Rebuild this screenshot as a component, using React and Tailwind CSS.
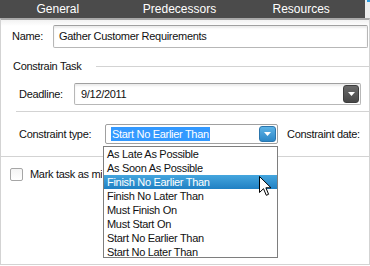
import React from "react";

const tabs = ["General", "Predecessors", "Resources"];

const options = [
  "As Late As Possible",
  "As Soon As Possible",
  "Finish No Earlier Than",
  "Finish No Later Than",
  "Must Finish On",
  "Must Start On",
  "Start No Earlier Than",
  "Start No Later Than",
];

const DownTriangle = () => (
  <svg width="7" height="4" viewBox="0 0 7 4">
    <path d="M0 0 H7 L3.5 4 Z" fill="#ffffff" />
  </svg>
);

const App = () => {
  return (
    <div
      className="relative w-[370px] h-[266px] overflow-hidden bg-white text-[11px] tracking-[-0.3px] text-[#111]"
      style={{ fontFamily: '"Liberation Sans", Arial, sans-serif' }}
    >
      {/* Tab header */}
      <div className="flex h-[18px]">
        <div className="flex flex-1 bg-[#4b4b4b] text-white text-[12px] tracking-normal">
          {tabs.map((t) => (
            <div key={t} className="flex-1 flex items-center justify-center pr-[6px]">
              {t}
            </div>
          ))}
        </div>
        <div className="w-[5px] bg-[#ececec]">
          <div className="ml-auto w-[3px] h-[2px] bg-[#2b9be0]" />
        </div>
      </div>

      {/* Body */}
      <div className="h-[247px] border-t-[2px] border-t-[#a9a9a9] border-l border-r border-b border-[#d3d3d3] bg-gradient-to-b from-[#f2f2f2] to-white to-[6px]">
        {/* Name */}
        <div className="flex items-center pt-[5px] pl-[11px]">
          <span className="w-[41px]">Name:</span>
          <div className="flex items-center flex-1 h-[23px] mr-[1px] pl-[5px] rounded-[2px] border border-[#b7b7b7] border-t-[#a0a0a0] bg-white shadow-[inset_0_2px_2px_rgba(0,0,0,0.08)]">
            Gather Customer Requirements
          </div>
        </div>

        {/* Constrain Task heading */}
        <div className="flex items-center mt-[12px] pl-[12px] h-[13px]">
          <span>Constrain Task</span>
          <div className="flex-1 h-px bg-[#d3d3d3] ml-[15px]" />
        </div>

        {/* Deadline */}
        <div className="flex items-center mt-[10px] pl-[18px]">
          <span className="w-[55px]">Deadline:</span>
          <div className="flex items-center w-[287px] h-[22px] pl-[6px] pr-[1px] rounded-[2px] border border-[#b7b7b7] border-t-[#a0a0a0] bg-white shadow-[inset_0_2px_2px_rgba(0,0,0,0.08)]">
            <span className="flex-1">9/12/2011</span>
            <div className="flex items-center justify-center w-[16px] h-[18px] rounded-[3px] border border-[#3d3d3d] bg-gradient-to-b from-[#6a6a6a] to-[#474747]">
              <DownTriangle />
            </div>
          </div>
        </div>

        <div className="h-px bg-[#d3d3d3] ml-[15px] mt-[6px]" />

        {/* Constraint type */}
        <div className="flex items-center mt-[12px] pl-[18px]">
          <span className="w-[86px]">Constraint type:</span>
          <div className="flex items-center w-[173px] h-[20px] pl-[5px] pr-[1px] rounded-[2px] border border-[#a0a0a0] bg-white">
            <span className="flex-1">
              <span className="bg-[#3399ff] text-white px-[1px] leading-[14px] inline-block">
                Start No Earlier Than
              </span>
            </span>
            <div className="flex items-center justify-center w-[17px] h-[16px] rounded-[3px] border border-[#2b76ad] bg-gradient-to-b from-[#5db3e6] to-[#2b87c7]">
              <DownTriangle />
            </div>
          </div>
          <span className="ml-[9px]">Constraint date:</span>
        </div>

        <div className="h-px bg-[#d3d3d3] mt-[12px]" />

        {/* Milestone checkbox (label hidden behind the open list) */}
        <div className="flex items-center mt-[9px] pl-[9px]">
          <div className="w-[13px] h-[13px] rounded-[2px] border border-[#a6a6a6] bg-gradient-to-b from-[#f4f4f4] to-white" />
          <span className="ml-[7px] w-[72px] overflow-hidden whitespace-nowrap">
            Mark task as milestone
          </span>
        </div>
      </div>

      {/* Open dropdown list */}
      <div className="absolute left-[103px] top-[146px] w-[175px] h-[112px] border border-[#7e7e7e] bg-white flex flex-col">
        {options.map((o, i) => (
          <div
            key={o}
            className={
              i === 2
                ? "h-[14px] leading-[14px] pl-[3px] text-white bg-gradient-to-b from-[#44a6de] to-[#1f80c3]"
                : "h-[14px] leading-[14px] pl-[3px]"
            }
          >
            {o}
          </div>
        ))}
      </div>

      {/* Mouse pointer */}
      <svg
        className="absolute left-[259px] top-[176px]"
        width="13"
        height="21"
        viewBox="0 0 13 21"
      >
        <path
          d="M0.5 0.5 V16.5 L4.5 12.7 L7.3 19.3 L9.6 18.3 L6.9 11.8 L12 11.8 Z"
          fill="#ffffff"
          stroke="#000000"
          strokeWidth="1"
          strokeLinejoin="miter"
        />
      </svg>
    </div>
  );
};

export default App;
